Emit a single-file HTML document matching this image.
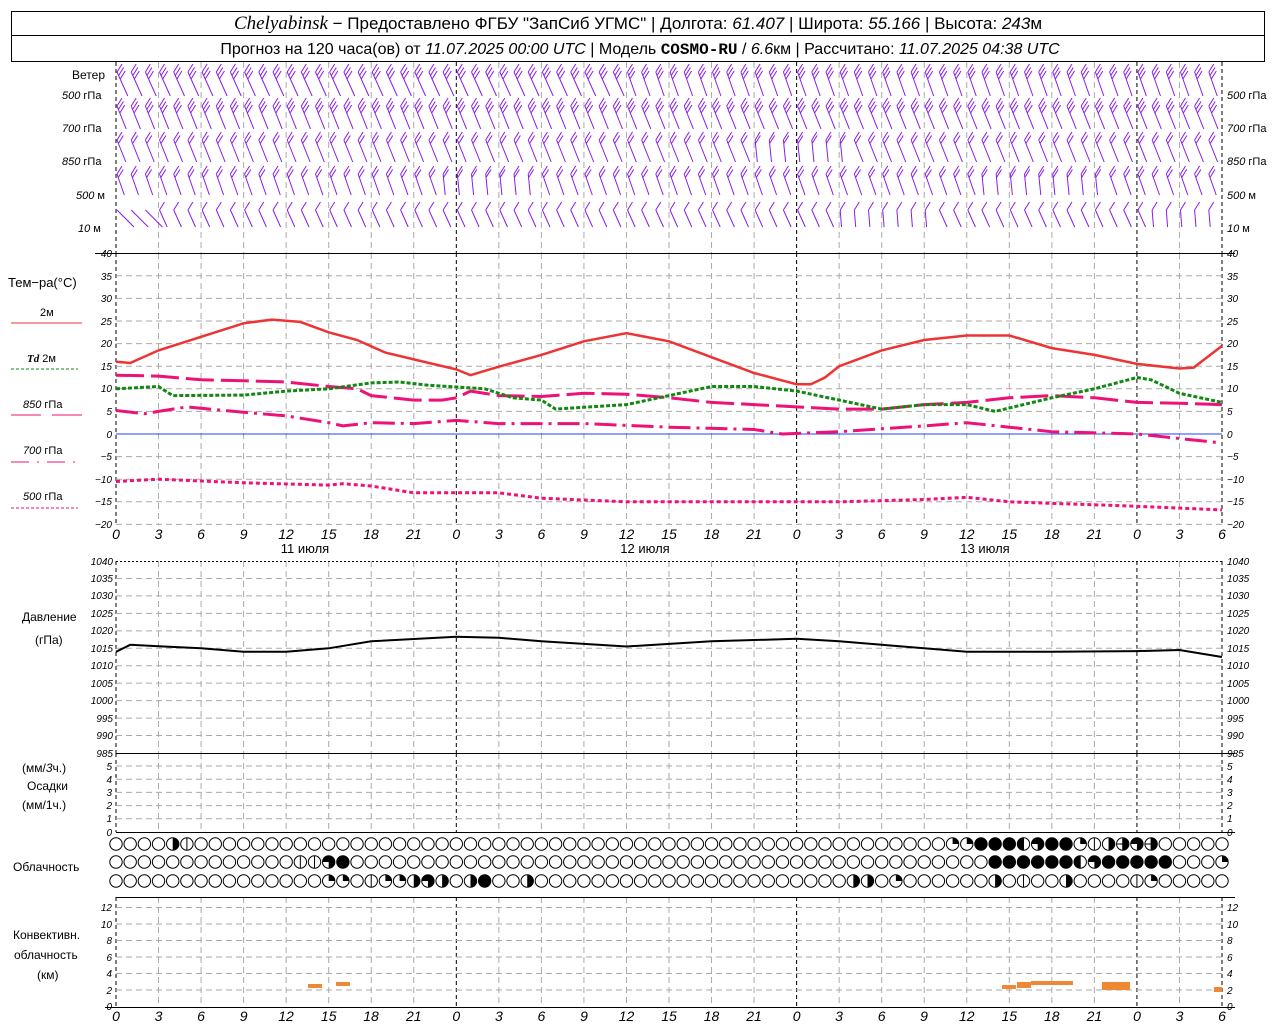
<!DOCTYPE html>
<html><head><meta charset="utf-8"><style>
html,body{margin:0;padding:0;background:#fff;width:1280px;height:1024px;overflow:hidden}
svg{display:block}
.s{font-family:"Liberation Sans",sans-serif;fill:#000}
.n{font-family:"Liberation Sans",sans-serif;font-style:italic;font-size:10px;fill:#000}
.xl{font-family:"Liberation Sans",sans-serif;font-style:italic;font-size:14px;fill:#000}
</style></head><body>
<svg id="g" width="1280" height="1024" viewBox="0 0 1280 1024" xmlns="http://www.w3.org/2000/svg">
<rect x="11.5" y="11.5" width="1253" height="50" fill="none" stroke="#000"/>
<line x1="11" y1="35.5" x2="1265" y2="35.5" stroke="#000"/>
<text x="638" y="29" text-anchor="middle" class="s" font-size="17"><tspan font-family="Liberation Serif" font-style="italic" font-size="19">Chelyabinsk</tspan> − Предоставлено ФГБУ "ЗапСиб УГМС" | Долгота: <tspan font-style="italic">61.407</tspan> | Широта: <tspan font-style="italic">55.166</tspan> | Высота: <tspan font-style="italic">243</tspan>м</text>
<text x="640" y="54" text-anchor="middle" class="s" font-size="16">Прогноз на 120 часа(ов) от <tspan font-style="italic">11.07.2025 00:00 UTC</tspan>  | Модель <tspan font-family="Liberation Mono" font-weight="bold">COSMO-RU</tspan> / <tspan font-style="italic">6.6</tspan>км | Рассчитано: <tspan font-style="italic">11.07.2025 04:38 UTC</tspan></text>

<g class="s" font-size="11">
<text x="72" y="79" font-size="12">Ветер</text>
<text x="62" y="99"><tspan font-style="italic">500</tspan> гПа</text>
<text x="62" y="132"><tspan font-style="italic">700</tspan> гПа</text>
<text x="62" y="165"><tspan font-style="italic">850</tspan> гПа</text>
<text x="76" y="199"><tspan font-style="italic">500</tspan> м</text>
<text x="78" y="232"><tspan font-style="italic">10</tspan>   м</text>
<text x="1227" y="99"><tspan font-style="italic">500</tspan> гПа</text>
<text x="1227" y="132"><tspan font-style="italic">700</tspan> гПа</text>
<text x="1227" y="165"><tspan font-style="italic">850</tspan> гПа</text>
<text x="1227" y="199"><tspan font-style="italic">500</tspan> м</text>
<text x="1227" y="232"><tspan font-style="italic">10</tspan>   м</text>
</g>

<g class="s" font-size="12">
<text x="8" y="287" font-size="13">Тем−ра(°C)</text>
<text x="40" y="316" font-size="11">2м</text>
<text x="27" y="362" font-size="11"><tspan font-family="Liberation Serif" font-style="italic" font-weight="bold">Td</tspan>  2м</text>
<text x="23" y="408" font-size="11"><tspan font-style="italic">850</tspan> гПа</text>
<text x="23" y="454" font-size="11"><tspan font-style="italic">700</tspan> гПа</text>
<text x="23" y="500" font-size="11"><tspan font-style="italic">500</tspan> гПа</text>
<text x="22" y="621">Давление</text>
<text x="35" y="644">(гПа)</text>
<text x="22" y="772">(мм/<tspan font-style="italic">3</tspan>ч.)</text>
<text x="27" y="790">Осадки</text>
<text x="22" y="809">(мм/1ч.)</text>
<text x="13" y="871">Облачность</text>
<text x="13" y="939">Конвективн.</text>
<text x="14" y="959">облачность</text>
<text x="37" y="979">(км)</text>
</g>
<line x1="11" y1="323" x2="82" y2="323" stroke="#ee3333" stroke-width="1"/>
<line x1="11" y1="369" x2="78" y2="369" stroke="#118811" stroke-dasharray="3 2"/>
<line x1="11" y1="415" x2="41" y2="415" stroke="#ee1177"/><line x1="52" y1="415" x2="82" y2="415" stroke="#ee1177"/>
<line x1="11" y1="462" x2="78" y2="462" stroke="#ee1177" stroke-dasharray="18 8 2 8"/>
<line x1="11" y1="508" x2="78" y2="508" stroke="#ee1177" stroke-dasharray="3 2"/>

<g id="grid"></g>
<g id="data"></g>

<g class="n" text-anchor="end">
<text x="112" y="257">40</text><text x="112" y="280">35</text><text x="112" y="302">30</text><text x="112" y="325">25</text><text x="112" y="347">20</text><text x="112" y="370">15</text><text x="112" y="392">10</text><text x="112" y="415">5</text><text x="112" y="438">0</text><text x="112" y="460">−5</text><text x="112" y="483">−10</text><text x="112" y="505">−15</text><text x="112" y="528">−20</text>
<text x="113" y="565">1040</text><text x="113" y="582">1035</text><text x="113" y="599">1030</text><text x="113" y="617">1025</text><text x="113" y="634">1020</text><text x="113" y="652">1015</text><text x="113" y="669">1010</text><text x="113" y="687">1005</text><text x="113" y="704">1000</text><text x="113" y="722">995</text><text x="113" y="739">990</text><text x="113" y="757">985</text>
<text x="112" y="770">5</text><text x="112" y="783">4</text><text x="112" y="796">3</text><text x="112" y="809">2</text><text x="112" y="822">1</text><text x="112" y="836">0</text>
<text x="112" y="911">12</text><text x="112" y="928">10</text><text x="112" y="944">8</text><text x="112" y="961">6</text><text x="112" y="977">4</text><text x="112" y="994">2</text><text x="112" y="1010">0</text>
</g>
<g class="n">
<text x="1227" y="257">40</text><text x="1227" y="280">35</text><text x="1227" y="302">30</text><text x="1227" y="325">25</text><text x="1227" y="347">20</text><text x="1227" y="370">15</text><text x="1227" y="392">10</text><text x="1227" y="415">5</text><text x="1227" y="438">0</text><text x="1227" y="460">−5</text><text x="1227" y="483">−10</text><text x="1227" y="505">−15</text><text x="1227" y="528">−20</text>
<text x="1227" y="565">1040</text><text x="1227" y="582">1035</text><text x="1227" y="599">1030</text><text x="1227" y="617">1025</text><text x="1227" y="634">1020</text><text x="1227" y="652">1015</text><text x="1227" y="669">1010</text><text x="1227" y="687">1005</text><text x="1227" y="704">1000</text><text x="1227" y="722">995</text><text x="1227" y="739">990</text><text x="1227" y="757">985</text>
<text x="1227" y="770">5</text><text x="1227" y="783">4</text><text x="1227" y="796">3</text><text x="1227" y="809">2</text><text x="1227" y="822">1</text><text x="1227" y="836">0</text>
<text x="1227" y="911">12</text><text x="1227" y="928">10</text><text x="1227" y="944">8</text><text x="1227" y="961">6</text><text x="1227" y="977">4</text><text x="1227" y="994">2</text><text x="1227" y="1010">0</text>
</g>
<g class="xl" text-anchor="middle">
<text y="539"><tspan x="116">0</tspan><tspan x="158.5">3</tspan><tspan x="201">6</tspan><tspan x="243.6">9</tspan><tspan x="286">12</tspan><tspan x="328.7">15</tspan><tspan x="371">18</tspan><tspan x="413.8">21</tspan><tspan x="456.3">0</tspan><tspan x="498.9">3</tspan><tspan x="541.4">6</tspan><tspan x="584">9</tspan><tspan x="626.5">12</tspan><tspan x="669">15</tspan><tspan x="711.5">18</tspan><tspan x="754">21</tspan><tspan x="796.6">0</tspan><tspan x="839">3</tspan><tspan x="881.7">6</tspan><tspan x="924">9</tspan><tspan x="966.8">12</tspan><tspan x="1009.3">15</tspan><tspan x="1051.8">18</tspan><tspan x="1094.4">21</tspan><tspan x="1137">0</tspan><tspan x="1179.5">3</tspan><tspan x="1222">6</tspan></text>
<text y="1021"><tspan x="116">0</tspan><tspan x="158.5">3</tspan><tspan x="201">6</tspan><tspan x="243.6">9</tspan><tspan x="286">12</tspan><tspan x="328.7">15</tspan><tspan x="371">18</tspan><tspan x="413.8">21</tspan><tspan x="456.3">0</tspan><tspan x="498.9">3</tspan><tspan x="541.4">6</tspan><tspan x="584">9</tspan><tspan x="626.5">12</tspan><tspan x="669">15</tspan><tspan x="711.5">18</tspan><tspan x="754">21</tspan><tspan x="796.6">0</tspan><tspan x="839">3</tspan><tspan x="881.7">6</tspan><tspan x="924">9</tspan><tspan x="966.8">12</tspan><tspan x="1009.3">15</tspan><tspan x="1051.8">18</tspan><tspan x="1094.4">21</tspan><tspan x="1137">0</tspan><tspan x="1179.5">3</tspan><tspan x="1222">6</tspan></text>
</g>
<g class="s" font-size="13" text-anchor="middle">
<text x="305" y="553">11 июля</text><text x="645" y="553">12 июля</text><text x="985" y="553">13 июля</text>
</g>
</svg>
<script>
var NS="http://www.w3.org/2000/svg";
function el(p,t,a){var e=document.createElementNS(NS,t);for(var k in a)e.setAttribute(k,a[k]);p.appendChild(e);return e;}
var G=document.getElementById("grid"),D=document.getElementById("data");
function X(h){return 116+h*14.1795;}
for(var h=0;h<=78;h+=3){
  var day=(h%24==0)||h==78;
  var st=day?"#000":"#aaa",da=day?"4 3":"6 4";
  [[62,253],[253,524],[561,753],[753,832],[897,1007]].forEach(function(s){
    el(G,"line",{x1:X(h),y1:s[0],x2:X(h),y2:s[1],stroke:st,"stroke-dasharray":da,"stroke-width":1});
  });
}
function hg(y){el(G,"line",{x1:116,y1:y,x2:1222,y2:y,stroke:"#aaa","stroke-dasharray":"6 4"});}
for(var t=35;t>=-20;t-=5) if(t!=0) hg(434-4.52*t);
for(var p=1035;p>=990;p-=5) hg(561+(1040-p)*3.4909);
for(var r=1;r<=5;r++) hg(832-r*13.2);
for(var c=2;c<=12;c+=2) hg(1006.5-c*8.25);
[[95,253,1235,253],[116,753,1235,753],[116,832,1235,832],[116,897,1235,897],[105,1007,1235,1007]].forEach(function(l){
  el(G,"line",{x1:l[0],y1:l[1]+.5,x2:l[2],y2:l[3]+.5,stroke:"#000"});});
el(G,"line",{x1:116,y1:561.5,x2:1222,y2:561.5,stroke:"#000","stroke-dasharray":"2 2"});
el(G,"line",{x1:116,y1:434,x2:1222,y2:434,stroke:"#2244ff","stroke-width":1});
function curve(pts,f,a){
  var s="";
  for(var i=0;i<pts.length;i+=2){s+=X(pts[i]).toFixed(1)+","+f(pts[i+1]).toFixed(1)+" ";}
  a.points=s;a.fill="none";el(D,"polyline",a);
}
function T(v){return 434-4.52*v;}
curve([0,-10.5,3,-10,9,-10.8,15,-11.3,16,-11,18,-11.5,21,-13,27,-13,30,-14.2,36,-15,45,-15,51,-15,57,-14.5,60,-14,63,-15,72,-16,78,-16.8],T,{stroke:"#ee1177","stroke-width":3,"stroke-dasharray":"4 3"});
curve([0,5.2,2,4.5,3,5,5,6,9,4.8,12,4,15,2.5,16,1.8,18,2.5,21,2.3,24,3,27,2.3,33,2.3,39,1.5,45,1,47,0,51,0.5,57,1.8,60,2.5,63,1.5,66,0.5,72,0,75,-1,78,-2],T,{stroke:"#ee1177","stroke-width":3,"stroke-dasharray":"22 6 3 6"});
curve([0,13,3,12.8,6,12,9,11.8,12,11.5,15,10.5,17,10,18,8.5,21,7.5,23,7.5,24,8,25,9.5,27,8.5,30,8.3,33,9,36,8.8,39,8,42,7,45,6.5,48,6,51,5.5,54,5.5,57,6.5,60,7,63,8,66,8.5,69,8,72,7,75,6.8,78,6.5],T,{stroke:"#ee1177","stroke-width":3,"stroke-dasharray":"28 7"});
curve([0,10,3,10.5,4,8.5,9,8.6,12,9.5,15,10,18,11.3,20,11.5,22,10.8,26,10,28,8,30,7.5,31,5.5,36,6.5,39,8.5,42,10.5,45,10.5,48,9.5,51,7.5,54,5.5,57,6.5,60,6.5,62,5,66,8,69,10,72,12.5,73,12,75,9,78,7],T,{stroke:"#118811","stroke-width":3,"stroke-dasharray":"4 2"});
curve([0,16,1,15.7,3,18.5,6,21.5,9,24.5,11,25.3,13,24.8,15,22.5,17,20.8,19,18,21,16.5,24,14.3,25,13,27,14.9,30,17.5,33,20.5,36,22.3,39,20.5,42,17,45,13.5,48,11,49,11,50,12.5,51,15,54,18.5,57,20.8,60,21.8,63,21.8,66,19,69,17.5,72,15.5,75,14.5,76,14.7,78,19.5],T,{stroke:"#ee3333","stroke-width":2.5});
curve([0,1014,1,1016,3,1015.6,6,1015,9,1014,12,1014,15,1015,18,1017,24,1018.3,27,1018,30,1017,36,1015.5,42,1017,48,1017.7,51,1017,54,1016,60,1014,66,1014,72,1014.2,75,1014.5,78,1012.5],function(p){return 561+(1040-p)*3.4909;},{stroke:"#000","stroke-width":2});
[[308,322,984,4],[336,350,982,4],[1002,1016,985,4],[1017,1031,982,6],[1031,1045,981,4],[1045,1073,981,4],[1102,1130,982,8],[1214,1222,987,5]].forEach(function(b){
  el(D,"rect",{x:b[0],y:b[2],width:b[1]-b[0],height:b[3],fill:"#ee8833"});});
// wind barbs: feathers on top pointing up-right, shaft slanting down-right
var rows=[[63,33,3],[97,32,3],[131,31,2],[165,30,2],[201,26,1]];
var dirs=[
 function(h){return h<36?0.45:0.35;},
 function(h){return 0.4;},
 function(h){return (h>44&&h<52)?0.1:0.4;},
 function(h){return (h>22&&h<30)||(h>60&&h<70)?0.1:0.35;},
 function(h){return h<3?1.0:((h>50&&h<58)||h>72?0.08:0.45);}
];
var P="#8a1be8";
rows.forEach(function(r,ri){
  for(var h=0;h<78;h++){
    var y0=r[0]+9,x0=X(h)+1,len=r[1]-9;
    var sl=dirs[ri](h);
    var x1=x0+len*sl,y1=y0+len;
    var d="M"+x0.toFixed(1)+" "+y0+"L"+x1.toFixed(1)+" "+y1;
    var nf=r[2];
    if(ri==4&&h<3) nf=0;
    for(var k=0;k<nf;k++){
      var fx=x0+sl*k*3.5,fy=y0+k*3.5;
      d+="M"+fx.toFixed(1)+" "+fy.toFixed(1)+"l5 -8";
    }
    el(D,"path",{d:d,stroke:P,"stroke-width":1,fill:"none"});
  }
});
function row(s){var a=s.split("");while(a.length<79)a.push("o");return a;}
var R1=row("oooorv"+"o".repeat(53)+"qqfffhtffqvrxtxoooooo");
var R2=row("o".repeat(13)+"vvtf"+"o".repeat(45)+"ffffffhtfffffoooq");
var R3=row("o".repeat(15)+"qqovqqrtrorf"+"ooro"+"o".repeat(21)+"rroqo"+"o".repeat(5)+"rovooroooovqooooooxvooovqoov");
function circ(h,y,t){
  var cx=X(h),r=6.2;
  el(D,"circle",{cx:cx,cy:y,r:r,fill:t=="f"?"#000":"#fff",stroke:"#000","stroke-width":1});
  if(t=="q") el(D,"path",{d:"M"+cx+" "+y+"V"+(y-r)+"A"+r+" "+r+" 0 0 1 "+(cx+r)+" "+y+"Z",fill:"#000"});
  if(t=="r") el(D,"path",{d:"M"+cx+" "+(y-r)+"A"+r+" "+r+" 0 0 1 "+cx+" "+(y+r)+"Z",fill:"#000"});
  if(t=="t") el(D,"path",{d:"M"+cx+" "+y+"H"+(cx-r)+"A"+r+" "+r+" 0 1 1 "+cx+" "+(y+r)+"Z",fill:"#000"});
  if(t=="h"){el(D,"path",{d:"M"+cx+" "+(y-r)+"A"+r+" "+r+" 0 0 0 "+cx+" "+(y+r)+"Z",fill:"#000"});el(D,"line",{x1:cx,y1:y-r,x2:cx,y2:y+r,stroke:"#000"});}
  if(t=="v"||t=="x") el(D,"line",{x1:cx,y1:y-r,x2:cx,y2:y+r,stroke:"#000"});
  if(t=="x"){el(D,"line",{x1:cx-r,y1:y,x2:cx+r,y2:y,stroke:"#000"});el(D,"path",{d:"M"+cx+" "+(y-r)+"A"+r+" "+r+" 0 0 1 "+cx+" "+(y+r)+"Z",fill:"#000"});}
}
for(var h=0;h<=78;h++){circ(h,844,R1[h]);circ(h,862,R2[h]);circ(h,881,R3[h]);}
</script>
</body></html>
